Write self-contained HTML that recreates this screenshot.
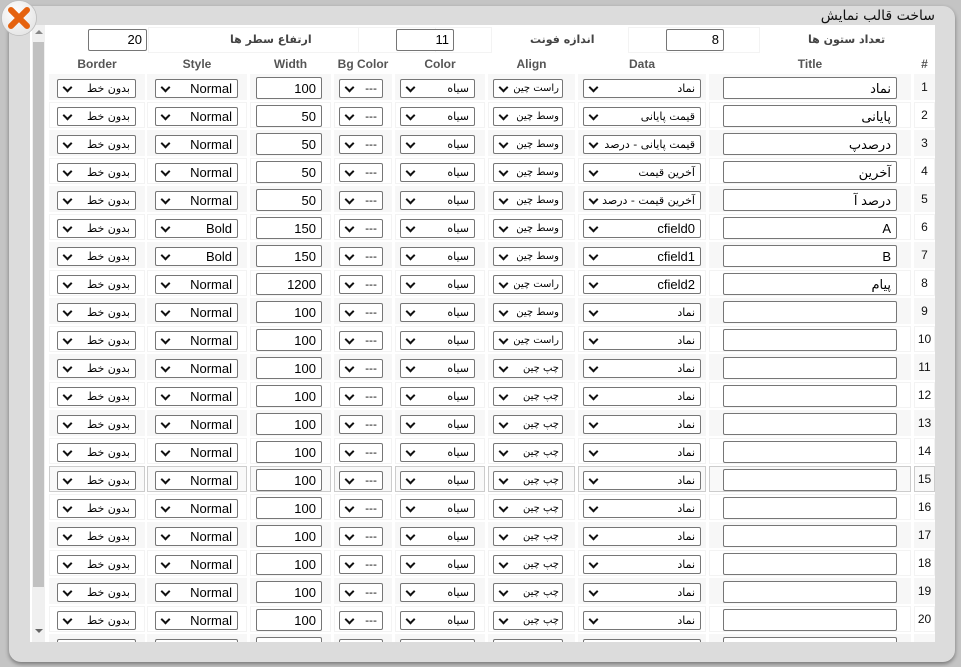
<!DOCTYPE html>
<html><head><meta charset="utf-8"><style>
*{box-sizing:border-box;margin:0;padding:0}
body{width:961px;height:667px;overflow:hidden;background:#c4c4c4;position:relative;font-family:"Liberation Sans","DejaVu Sans",sans-serif}
.dlg{position:absolute;left:9px;top:6px;width:946px;height:656px;background:#dcdcdc;border-radius:12px;box-shadow:0 2px 4px rgba(0,0,0,.4)}
.ttl{position:absolute;right:26px;top:8px;font-size:14px;color:#111;font-family:"DejaVu Sans",sans-serif}
.content{position:absolute;left:30px;top:25px;width:905px;height:617px;background:#fff;overflow:hidden}
.sb{position:absolute;left:2px;top:0;width:13px;height:617px;background:#f0f0f0}
.sb .th{position:absolute;left:1px;top:17px;width:11px;height:545px;background:#c1c1c1}
.ar{position:absolute;left:3px;width:0;height:0;border-left:4px solid transparent;border-right:4px solid transparent}
.in{position:absolute;background:#fff;border:1px solid #767676;border-radius:2px;font-size:13px;text-align:right;padding-right:4px;line-height:19px;color:#000}
.lb{position:absolute;font-size:11px;font-weight:bold;color:#444;font-family:"DejaVu Sans",sans-serif}
.hd{position:absolute;top:32px;font-size:12px;font-weight:bold;color:#555;text-align:center}
.r{position:absolute;left:0;width:905px;height:26px}
.c{position:absolute;top:0;height:26px;border:1px solid #f3f3f3}
.r.g .c{background:#f7f7f7;border-color:#f7f7f7}
.r.h .c{border-color:#ccc;background:#f9f9f9}
.s{position:absolute;top:4px;height:19px;border:1px solid #767676;border-radius:2px;background:#fff;font-size:11px;text-align:right;padding-right:5px;padding-left:18px;line-height:17px;color:#000;white-space:nowrap;overflow:hidden;font-family:"DejaVu Sans",sans-serif}
.c6 .s{font-size:10px;padding-right:3px}
.s.n{font-size:13px;font-family:"Liberation Sans",sans-serif}
.s::before{content:"";position:absolute;left:6px;top:4px;width:5px;height:5px;border-right:2px solid #111;border-bottom:2px solid #111;transform:rotate(45deg)}
.i{position:absolute;top:2px;height:22px;border:1px solid #767676;border-radius:2px;background:#fff;font-size:13px;text-align:right;padding-right:5px;line-height:22px;color:#000;font-family:"Liberation Sans","DejaVu Sans",sans-serif}
.c1{left:19px;width:96px}.c1 .s{left:7px;width:79px}
.c2{left:117px;width:100px}.c2 .s{left:7px;width:83px}
.c3{left:220px;width:81px}.c3 .i{left:5px;width:66px}
.c4{left:304px;width:58px}.c4 .s{left:4px;width:44px}
.c5{left:365px;width:90px}.c5 .s{left:4px;width:75px}
.c6{left:458px;width:87px}.c6 .s{left:4px;width:70px}
.c7{left:548px;width:128px}.c7 .s{left:4px;width:118px}
.c8{left:679px;width:202px}.c8 .i{left:13px;width:174px}
.c9{left:884px;width:21px;font-size:12px;line-height:24px;text-align:center;color:#111}
.x{position:absolute;left:0;top:0;width:38px;height:37px}
</style></head><body>
<div class="dlg"></div>
<div class="ttl">ساخت قالب نمایش</div>
<div class="content">
<div class="sb"><div class="ar" style="top:5px;border-bottom:4px solid #888"></div><div class="th"></div><div class="ar" style="top:604px;border-top:4px solid #666"></div></div>
<div style="position:absolute;left:118px;top:2px;width:288px;height:26px;border:1px solid #f3f3f3"></div>
<div class="in" style="left:58px;top:4px;width:59px;height:22px">20</div>
<div class="lb" style="left:200px;top:8px">ارتفاع سطر ها</div>
<div style="position:absolute;left:328px;top:2px;width:134px;height:26px;border:1px solid #f3f3f3"></div>
<div class="in" style="left:366px;top:4px;width:58px;height:22px">11</div>
<div class="lb" style="left:500px;top:8px">اندازه فونت</div>
<div style="position:absolute;left:598px;top:2px;width:132px;height:26px;border:1px solid #f3f3f3"></div>
<div class="in" style="left:636px;top:4px;width:58px;height:22px">8</div>
<div class="lb" style="left:778px;top:8px">تعداد ستون ها</div>
<div class="hd" style="left:19px;width:96px">Border</div>
<div class="hd" style="left:117px;width:100px">Style</div>
<div class="hd" style="left:220px;width:81px">Width</div>
<div class="hd" style="left:304px;width:58px">Bg Color</div>
<div class="hd" style="left:365px;width:90px">Color</div>
<div class="hd" style="left:458px;width:87px">Align</div>
<div class="hd" style="left:548px;width:128px">Data</div>
<div class="hd" style="left:679px;width:202px">Title</div>
<div class="hd" style="left:884px;width:21px">#</div>

<div class="r g" style="top:49px"><div class="c c1"><div class="s">بدون خط</div></div><div class="c c2"><div class="s n">Normal</div></div><div class="c c3"><div class="i">100</div></div><div class="c c4"><div class="s">---</div></div><div class="c c5"><div class="s">سیاه</div></div><div class="c c6"><div class="s">راست چین</div></div><div class="c c7"><div class="s">نماد</div></div><div class="c c8"><div class="i">نماد</div></div><div class="c c9">1</div></div>
<div class="r" style="top:77px"><div class="c c1"><div class="s">بدون خط</div></div><div class="c c2"><div class="s n">Normal</div></div><div class="c c3"><div class="i">50</div></div><div class="c c4"><div class="s">---</div></div><div class="c c5"><div class="s">سیاه</div></div><div class="c c6"><div class="s">وسط چین</div></div><div class="c c7"><div class="s">قیمت پایانی</div></div><div class="c c8"><div class="i">پایانی</div></div><div class="c c9">2</div></div>
<div class="r g" style="top:105px"><div class="c c1"><div class="s">بدون خط</div></div><div class="c c2"><div class="s n">Normal</div></div><div class="c c3"><div class="i">50</div></div><div class="c c4"><div class="s">---</div></div><div class="c c5"><div class="s">سیاه</div></div><div class="c c6"><div class="s">وسط چین</div></div><div class="c c7"><div class="s">قیمت پایانی - درصد</div></div><div class="c c8"><div class="i">درصدپ</div></div><div class="c c9">3</div></div>
<div class="r" style="top:133px"><div class="c c1"><div class="s">بدون خط</div></div><div class="c c2"><div class="s n">Normal</div></div><div class="c c3"><div class="i">50</div></div><div class="c c4"><div class="s">---</div></div><div class="c c5"><div class="s">سیاه</div></div><div class="c c6"><div class="s">وسط چین</div></div><div class="c c7"><div class="s">آخرین قیمت</div></div><div class="c c8"><div class="i">آخرین</div></div><div class="c c9">4</div></div>
<div class="r g" style="top:161px"><div class="c c1"><div class="s">بدون خط</div></div><div class="c c2"><div class="s n">Normal</div></div><div class="c c3"><div class="i">50</div></div><div class="c c4"><div class="s">---</div></div><div class="c c5"><div class="s">سیاه</div></div><div class="c c6"><div class="s">وسط چین</div></div><div class="c c7"><div class="s">آخرین قیمت - درصد</div></div><div class="c c8"><div class="i">درصد آ</div></div><div class="c c9">5</div></div>
<div class="r" style="top:189px"><div class="c c1"><div class="s">بدون خط</div></div><div class="c c2"><div class="s n">Bold</div></div><div class="c c3"><div class="i">150</div></div><div class="c c4"><div class="s">---</div></div><div class="c c5"><div class="s">سیاه</div></div><div class="c c6"><div class="s">وسط چین</div></div><div class="c c7"><div class="s n">cfield0</div></div><div class="c c8"><div class="i">A</div></div><div class="c c9">6</div></div>
<div class="r g" style="top:217px"><div class="c c1"><div class="s">بدون خط</div></div><div class="c c2"><div class="s n">Bold</div></div><div class="c c3"><div class="i">150</div></div><div class="c c4"><div class="s">---</div></div><div class="c c5"><div class="s">سیاه</div></div><div class="c c6"><div class="s">وسط چین</div></div><div class="c c7"><div class="s n">cfield1</div></div><div class="c c8"><div class="i">B</div></div><div class="c c9">7</div></div>
<div class="r" style="top:245px"><div class="c c1"><div class="s">بدون خط</div></div><div class="c c2"><div class="s n">Normal</div></div><div class="c c3"><div class="i">1200</div></div><div class="c c4"><div class="s">---</div></div><div class="c c5"><div class="s">سیاه</div></div><div class="c c6"><div class="s">راست چین</div></div><div class="c c7"><div class="s n">cfield2</div></div><div class="c c8"><div class="i">پیام</div></div><div class="c c9">8</div></div>
<div class="r g" style="top:273px"><div class="c c1"><div class="s">بدون خط</div></div><div class="c c2"><div class="s n">Normal</div></div><div class="c c3"><div class="i">100</div></div><div class="c c4"><div class="s">---</div></div><div class="c c5"><div class="s">سیاه</div></div><div class="c c6"><div class="s">وسط چین</div></div><div class="c c7"><div class="s">نماد</div></div><div class="c c8"><div class="i"></div></div><div class="c c9">9</div></div>
<div class="r" style="top:301px"><div class="c c1"><div class="s">بدون خط</div></div><div class="c c2"><div class="s n">Normal</div></div><div class="c c3"><div class="i">100</div></div><div class="c c4"><div class="s">---</div></div><div class="c c5"><div class="s">سیاه</div></div><div class="c c6"><div class="s">راست چین</div></div><div class="c c7"><div class="s">نماد</div></div><div class="c c8"><div class="i"></div></div><div class="c c9">10</div></div>
<div class="r g" style="top:329px"><div class="c c1"><div class="s">بدون خط</div></div><div class="c c2"><div class="s n">Normal</div></div><div class="c c3"><div class="i">100</div></div><div class="c c4"><div class="s">---</div></div><div class="c c5"><div class="s">سیاه</div></div><div class="c c6"><div class="s">چپ چین</div></div><div class="c c7"><div class="s">نماد</div></div><div class="c c8"><div class="i"></div></div><div class="c c9">11</div></div>
<div class="r" style="top:357px"><div class="c c1"><div class="s">بدون خط</div></div><div class="c c2"><div class="s n">Normal</div></div><div class="c c3"><div class="i">100</div></div><div class="c c4"><div class="s">---</div></div><div class="c c5"><div class="s">سیاه</div></div><div class="c c6"><div class="s">چپ چین</div></div><div class="c c7"><div class="s">نماد</div></div><div class="c c8"><div class="i"></div></div><div class="c c9">12</div></div>
<div class="r g" style="top:385px"><div class="c c1"><div class="s">بدون خط</div></div><div class="c c2"><div class="s n">Normal</div></div><div class="c c3"><div class="i">100</div></div><div class="c c4"><div class="s">---</div></div><div class="c c5"><div class="s">سیاه</div></div><div class="c c6"><div class="s">چپ چین</div></div><div class="c c7"><div class="s">نماد</div></div><div class="c c8"><div class="i"></div></div><div class="c c9">13</div></div>
<div class="r" style="top:413px"><div class="c c1"><div class="s">بدون خط</div></div><div class="c c2"><div class="s n">Normal</div></div><div class="c c3"><div class="i">100</div></div><div class="c c4"><div class="s">---</div></div><div class="c c5"><div class="s">سیاه</div></div><div class="c c6"><div class="s">چپ چین</div></div><div class="c c7"><div class="s">نماد</div></div><div class="c c8"><div class="i"></div></div><div class="c c9">14</div></div>
<div class="r h" style="top:441px"><div class="c c1"><div class="s">بدون خط</div></div><div class="c c2"><div class="s n">Normal</div></div><div class="c c3"><div class="i">100</div></div><div class="c c4"><div class="s">---</div></div><div class="c c5"><div class="s">سیاه</div></div><div class="c c6"><div class="s">چپ چین</div></div><div class="c c7"><div class="s">نماد</div></div><div class="c c8"><div class="i"></div></div><div class="c c9">15</div></div>
<div class="r" style="top:469px"><div class="c c1"><div class="s">بدون خط</div></div><div class="c c2"><div class="s n">Normal</div></div><div class="c c3"><div class="i">100</div></div><div class="c c4"><div class="s">---</div></div><div class="c c5"><div class="s">سیاه</div></div><div class="c c6"><div class="s">چپ چین</div></div><div class="c c7"><div class="s">نماد</div></div><div class="c c8"><div class="i"></div></div><div class="c c9">16</div></div>
<div class="r g" style="top:497px"><div class="c c1"><div class="s">بدون خط</div></div><div class="c c2"><div class="s n">Normal</div></div><div class="c c3"><div class="i">100</div></div><div class="c c4"><div class="s">---</div></div><div class="c c5"><div class="s">سیاه</div></div><div class="c c6"><div class="s">چپ چین</div></div><div class="c c7"><div class="s">نماد</div></div><div class="c c8"><div class="i"></div></div><div class="c c9">17</div></div>
<div class="r" style="top:525px"><div class="c c1"><div class="s">بدون خط</div></div><div class="c c2"><div class="s n">Normal</div></div><div class="c c3"><div class="i">100</div></div><div class="c c4"><div class="s">---</div></div><div class="c c5"><div class="s">سیاه</div></div><div class="c c6"><div class="s">چپ چین</div></div><div class="c c7"><div class="s">نماد</div></div><div class="c c8"><div class="i"></div></div><div class="c c9">18</div></div>
<div class="r g" style="top:553px"><div class="c c1"><div class="s">بدون خط</div></div><div class="c c2"><div class="s n">Normal</div></div><div class="c c3"><div class="i">100</div></div><div class="c c4"><div class="s">---</div></div><div class="c c5"><div class="s">سیاه</div></div><div class="c c6"><div class="s">چپ چین</div></div><div class="c c7"><div class="s">نماد</div></div><div class="c c8"><div class="i"></div></div><div class="c c9">19</div></div>
<div class="r" style="top:581px"><div class="c c1"><div class="s">بدون خط</div></div><div class="c c2"><div class="s n">Normal</div></div><div class="c c3"><div class="i">100</div></div><div class="c c4"><div class="s">---</div></div><div class="c c5"><div class="s">سیاه</div></div><div class="c c6"><div class="s">چپ چین</div></div><div class="c c7"><div class="s">نماد</div></div><div class="c c8"><div class="i"></div></div><div class="c c9">20</div></div>
<div class="r g" style="top:609px"><div class="c c1"><div class="s">بدون خط</div></div><div class="c c2"><div class="s n">Normal</div></div><div class="c c3"><div class="i">100</div></div><div class="c c4"><div class="s">---</div></div><div class="c c5"><div class="s">سیاه</div></div><div class="c c6"><div class="s">چپ چین</div></div><div class="c c7"><div class="s">نماد</div></div><div class="c c8"><div class="i"></div></div><div class="c c9">21</div></div>
</div>
<svg class="x" viewBox="0 0 38 37" width="38" height="37">
<defs><radialGradient id="gw" cx="40%" cy="35%" r="65%"><stop offset="0" stop-color="#ffffff"/><stop offset="1" stop-color="#e6e6e6"/></radialGradient></defs>
<circle cx="19" cy="18" r="17.5" fill="url(#gw)" stroke="#bbb" stroke-width="0.8"/>
<path d="M11 10 L27 26 M27 10 L11 26" stroke="#e5620f" stroke-width="6" stroke-linecap="round"/>
</svg>
</body></html>
